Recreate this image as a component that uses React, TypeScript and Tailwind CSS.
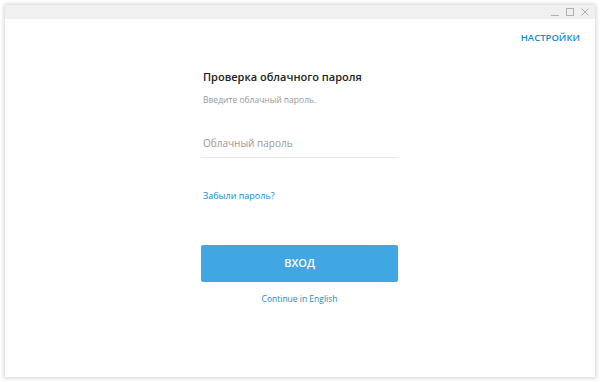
export default function App() {
  return (
    <div className="w-[600px] h-[382px] bg-white flex p-[5px] pb-[5px]" style={{ fontFamily: '"Open Sans", sans-serif' }}>
      <div className="flex-1 flex flex-col bg-white shadow-[0_0_4px_1px_rgba(0,0,0,0.18)]">
        <div className="h-[14px] bg-[#f0f0f0] flex justify-end items-center gap-[7px] pr-[6px]">
          <svg width="8" height="8" viewBox="0 0 8 8"><path d="M0 7.5H8" stroke="#b0b0b0" strokeWidth="1" /></svg>
          <svg width="8" height="8" viewBox="0 0 8 8"><rect x="0.5" y="0.5" width="7" height="7" fill="none" stroke="#b0b0b0" strokeWidth="1" /></svg>
          <svg width="8" height="8" viewBox="0 0 8 8"><path d="M0.5 0.5L7.5 7.5M7.5 0.5L0.5 7.5" stroke="#b0b0b0" strokeWidth="1" /></svg>
        </div>
        <div className="flex justify-end pr-[15px] pt-[12px]">
          <span className="text-[9.5px] font-semibold text-[#168acd] leading-[14px]">НАСТРОЙКИ</span>
        </div>
        <div className="flex flex-col w-[197px] ml-[196px] mt-[24px]">
          <div className="text-[11px] font-semibold text-[#222] leading-[16px] pl-[2px]">Проверка облачного пароля</div>
          <div className="text-[8.5px] text-[#999] leading-[12px] mt-[9px] pl-[2px]">Введите облачный пароль.</div>
          <div className="text-[10px] text-[#999] leading-[14px] mt-[30px] pl-[2px]">Облачный пароль</div>
          <div className="h-px bg-[#e8e8e8] mt-[7px]" />
          <div className="text-[9px] text-[#168acd] leading-[14px] mt-[31px] pl-[2px]">Забыли пароль?</div>
          <div className="h-[37px] bg-[#40a7e3] rounded-[2px] mt-[42px] flex items-center justify-center text-white text-[11px] font-semibold">ВХОД</div>
          <div className="text-[8.5px] text-[#168acd] leading-[14px] mt-[10px] text-center">Continue in English</div>
        </div>
      </div>
    </div>
  );
}
